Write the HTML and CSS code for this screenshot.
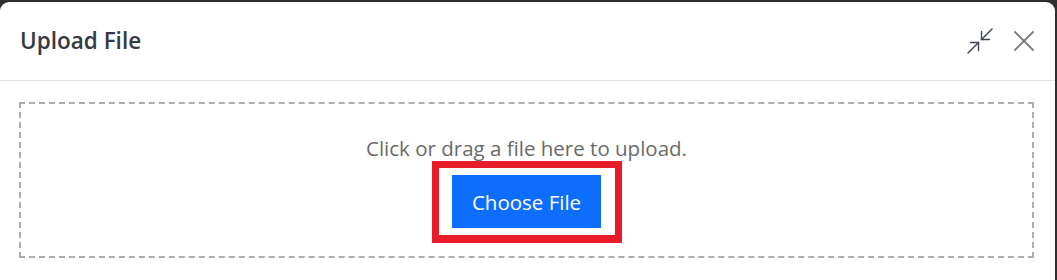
FILE: index.html
```html
<!DOCTYPE html>
<html lang="en">
<head>
<meta charset="utf-8">
<title>Upload File</title>
<link rel="stylesheet" href="styles.css">
</head>
<body>
  <div class="modal">
    <div class="modal-header">
      <h5 class="modal-title">Upload File</h5>
      <div class="header-actions">
        <button class="icon-btn" aria-label="Minimize">
          <svg width="26" height="26" viewBox="0 0 26 26" fill="none" stroke="#3f4652" stroke-width="1.4" stroke-linecap="round">
            <path d="M1 25 L11.5 14.5"/>
            <path d="M3.5 14.5 H11.5 V22.5"/>
            <path d="M25 1 L14.5 11.5"/>
            <path d="M14.5 3.5 V11.5 H22.5"/>
          </svg>
        </button>
        <button class="icon-btn" aria-label="Close">
          <svg width="20" height="20" viewBox="0 0 20 20" fill="none" stroke="#7a7a7a" stroke-width="1.8" stroke-linecap="round">
            <path d="M1 1 L19 19"/>
            <path d="M19 1 L1 19"/>
          </svg>
        </button>
      </div>
    </div>
    <div class="modal-body">
      <div class="dropzone">
        <p class="drop-text">Click or drag a file here to upload.</p>
        <div class="btn-wrap">
          <button class="btn-primary">Choose File</button>
        </div>
      </div>
    </div>
  </div>
</body>
</html>
```
FILE: styles.css
```css
html, body {
  margin: 0;
  padding: 0;
}
body {
  background: #2e2e2e;
  width: 1057px;
  height: 280px;
  overflow: hidden;
  font-family: "Open Sans", "Noto Sans", sans-serif;
}
.modal {
  margin-top: 2px;
  width: 1055px;
  height: 278px;
  overflow: hidden;
  background: #ffffff;
  border-radius: 9px 9px 0 0;
}
.modal-header {
  height: 79px;
  box-sizing: border-box;
  border-bottom: 1px solid #dee2e6;
  display: flex;
  align-items: center;
  justify-content: space-between;
  padding: 0 21px 1px 20px;
}
.modal-title {
  margin: 0;
  font-size: 22.5px;
  line-height: 30px;
  font-weight: 600;
  color: #343a44;
}
.header-actions {
  display: flex;
  align-items: center;
  gap: 21px;
}
.icon-btn {
  border: 0;
  background: none;
  padding: 0;
  display: flex;
}
.modal-body {
  padding: 21px 21px 0 19px;
}
.dropzone {
  border: 2px dashed #adadad;
  display: flex;
  flex-direction: column;
  align-items: center;
  padding-top: 31px;
  box-sizing: border-box;
  height: 156px;
}
.drop-text {
  margin: 0;
  font-size: 20.5px;
  line-height: 26px;
  color: #6a6a6a;
}
.btn-wrap {
  position: relative;
  margin-top: 14px;
}
.btn-wrap::after {
  content: "";
  position: absolute;
  left: -20px;
  right: -21px;
  top: -14px;
  bottom: -15px;
  border: 7px solid #e81b2a;
  border-bottom-width: 8px;
  pointer-events: none;
}
.btn-primary {
  display: block;
  width: 149px;
  height: 53px;
  border: 0;
  border-radius: 0;
  background: #0d6efd;
  color: #ffffff;
  font-family: "Open Sans", "Noto Sans", sans-serif;
  font-size: 20.5px;
  padding: 0;
}
```
